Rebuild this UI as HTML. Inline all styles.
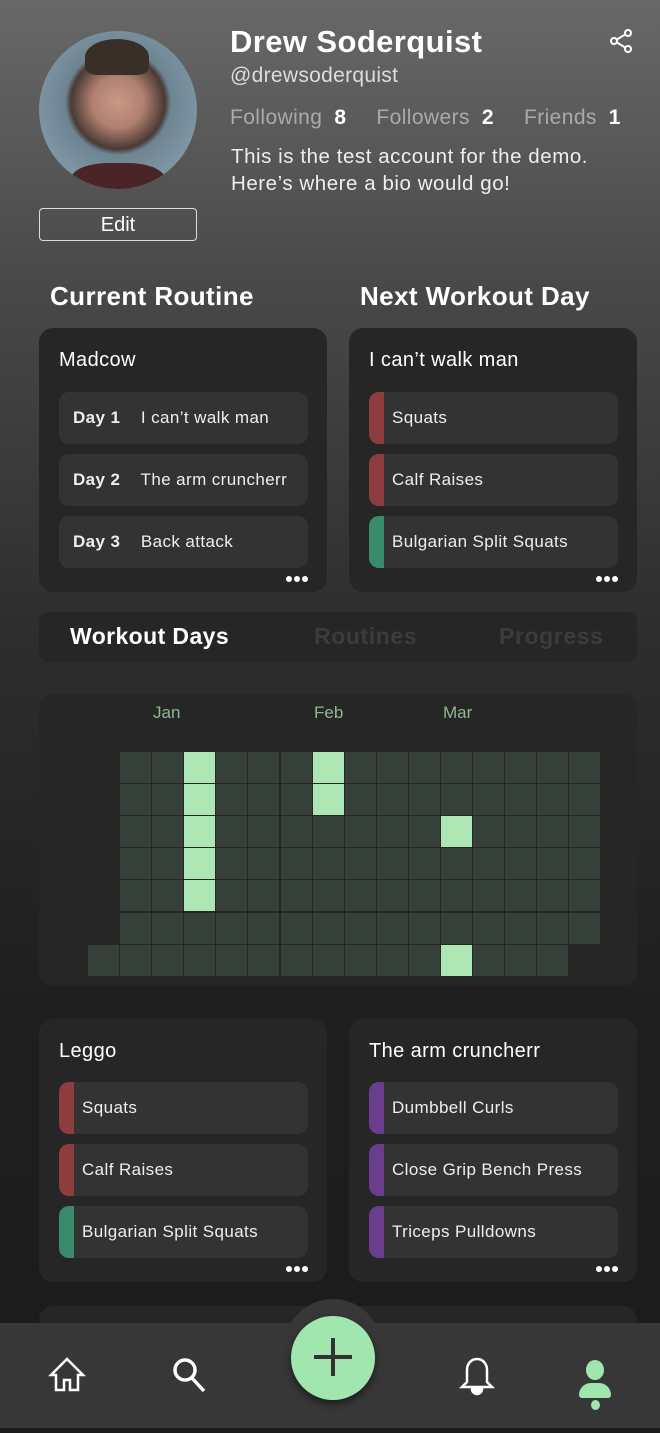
<!DOCTYPE html>
<html><head><meta charset="utf-8"><style>
*{margin:0;padding:0;box-sizing:border-box}
body{width:660px;height:1433px;overflow:hidden;position:relative;font-family:"Liberation Sans","DejaVu Sans",sans-serif;color:#fff;background:linear-gradient(#686868 0px,#474747 300px,#2d2d2d 640px,#1f1f1f 1000px,#1b1b1b 1433px)}
.a{position:absolute}
.card{position:absolute;background:#262626;border-radius:14px}
.row{position:absolute;left:20px;width:249px;height:52px;background:#333;border-radius:10px;font-size:17px;line-height:52px;overflow:hidden;color:#eee;letter-spacing:0.4px;white-space:nowrap}
.bar{position:absolute;left:0;top:0;width:15px;height:52px}
.dots{position:absolute;right:19px;bottom:8px;font-size:8px;letter-spacing:2px}
.dots i{display:inline-block;width:6px;height:6px;border-radius:3px;background:#fff;margin-left:2px}
.ct{position:absolute;left:20px;top:21px;font-size:20px;letter-spacing:0.4px}
.cell{position:absolute;width:31px;height:31px;background:#354039}
.on{background:#aee6b4}
</style></head><body>
<div class="a" style="left:39px;top:31px;width:158px;height:158px;border-radius:50%;background:radial-gradient(circle at 50% 45%,#c89a85 0,#b08070 22%,#4a3a35 40%,#6d8493 45%,#7e95a3 70%,#5b6f7c 100%);overflow:hidden">
<div class="a" style="left:32px;top:132px;width:94px;height:40px;background:#4a2426;border-radius:40% 40% 0 0"></div>
<div class="a" style="left:46px;top:8px;width:64px;height:36px;background:#3a2e28;border-radius:50% 50% 20% 20%"></div></div>
<div class="a" style="left:39px;top:208px;width:158px;height:33px;border:1.5px solid #ddd;border-radius:4px;text-align:center;font-size:20px;line-height:32px">Edit</div>
<div class="a" style="left:230px;top:24px;font-size:31px;font-weight:bold;letter-spacing:0.4px">Drew Soderquist</div>
<div class="a" style="left:230px;top:64px;font-size:21px;color:#ddd;letter-spacing:0.3px">@drewsoderquist</div>
<div class="a" style="left:230px;top:106px;font-size:21px;color:#aaa;letter-spacing:0.4px;white-space:nowrap">Following<b style="color:#fff;margin-left:12px">8</b><span style="margin-left:30px">Followers</span><b style="color:#fff;margin-left:12px">2</b><span style="margin-left:30px">Friends</span><b style="color:#fff;margin-left:12px">1</b></div>
<div class="a" style="left:231px;top:143px;font-size:20.5px;line-height:27px;color:#eee;letter-spacing:0.55px;white-space:nowrap">This is the test account for the demo.<br>Here’s where a bio would go!</div>
<svg class="a" style="left:608px;top:28px" width="26" height="26" viewBox="0 0 26 26" fill="none" stroke="#fff" stroke-width="2"><circle cx="20" cy="5" r="3"/><circle cx="6" cy="13" r="3"/><circle cx="20" cy="21" r="3"/><path d="M8.6 11.6 17.4 6.4M8.6 14.4 17.4 19.6"/></svg>
<div class="a" style="left:50px;top:281px;font-size:26px;font-weight:bold;letter-spacing:0.4px">Current Routine</div>
<div class="a" style="left:360px;top:281px;font-size:26px;font-weight:bold;letter-spacing:0.4px">Next Workout Day</div>

<div class="card" style="left:39px;top:328px;width:288px;height:264px"><div class="ct">Madcow</div>
<div class="row" style="top:64px;padding-left:14px"><b>Day 1</b>&nbsp;&nbsp;&nbsp; I can’t walk man</div>
<div class="row" style="top:126px;padding-left:14px"><b>Day 2</b>&nbsp;&nbsp;&nbsp; The arm cruncherr</div>
<div class="row" style="top:188px;padding-left:14px"><b>Day 3</b>&nbsp;&nbsp;&nbsp; Back attack</div>
<div class="dots"><i></i><i></i><i></i></div></div>
<div class="card" style="left:349px;top:328px;width:288px;height:264px"><div class="ct">I can’t walk man</div>
<div class="row" style="top:64px;padding-left:23px"><div class="bar" style="background:#8e3d3f"></div>Squats</div>
<div class="row" style="top:126px;padding-left:23px"><div class="bar" style="background:#8e3d3f"></div>Calf Raises</div>
<div class="row" style="top:188px;padding-left:23px"><div class="bar" style="background:#3a8a6c"></div>Bulgarian Split Squats</div>
<div class="dots"><i></i><i></i><i></i></div></div>

<div class="card" style="left:39px;top:612px;width:598px;height:50px;border-radius:10px">
<div class="a" style="left:31px;top:11px;font-size:23px;font-weight:bold;letter-spacing:0.4px">Workout Days</div>
<div class="a" style="left:275px;top:11px;font-size:23px;font-weight:bold;color:#3c3c3c;letter-spacing:0.6px">Routines</div>
<div class="a" style="left:460px;top:11px;font-size:23px;font-weight:bold;color:#3c3c3c;letter-spacing:0.6px">Progress</div></div>

<div class="card" style="left:39px;top:694px;width:598px;height:292px">
<div class="a" style="left:114px;top:9px;font-size:17px;color:#8fb894">Jan</div>
<div class="a" style="left:275px;top:9px;font-size:17px;color:#8fb894">Feb</div>
<div class="a" style="left:404px;top:9px;font-size:17px;color:#8fb894">Mar</div>
</div>
<div id="g"></div>
<script>
var on={"0,2":1,"0,6":1,"1,2":1,"1,6":1,"2,2":1,"2,10":1,"3,2":1,"4,2":1,"6,10":1};
var h="";for(var r=0;r<7;r++){var s=r==6?-1:0,e=r==6?14:15;for(var c=s;c<e;c++){h+='<div class="cell'+(on[r+","+c]?' on':'')+'" style="left:'+(120+c*32.1)+'px;top:'+(752+r*32.1)+'px"></div>';}}
document.getElementById("g").innerHTML=h;
</script>

<div class="card" style="left:39px;top:1019px;width:288px;height:263px"><div class="ct">Leggo</div>
<div class="row" style="top:63px;padding-left:23px"><div class="bar" style="background:#8e3d3f"></div>Squats</div>
<div class="row" style="top:125px;padding-left:23px"><div class="bar" style="background:#8e3d3f"></div>Calf Raises</div>
<div class="row" style="top:187px;padding-left:23px"><div class="bar" style="background:#3a8a6c"></div>Bulgarian Split Squats</div>
<div class="dots"><i></i><i></i><i></i></div></div>
<div class="card" style="left:349px;top:1019px;width:288px;height:263px"><div class="ct">The arm cruncherr</div>
<div class="row" style="top:63px;padding-left:23px"><div class="bar" style="background:#6b3d8f"></div>Dumbbell Curls</div>
<div class="row" style="top:125px;padding-left:23px"><div class="bar" style="background:#6b3d8f"></div>Close Grip Bench Press</div>
<div class="row" style="top:187px;padding-left:23px"><div class="bar" style="background:#6b3d8f"></div>Triceps Pulldowns</div>
<div class="dots"><i></i><i></i><i></i></div></div>
<div class="card" style="left:39px;top:1306px;width:598px;height:60px"></div>

<div class="a" style="left:0;top:1323px;width:660px;height:105px;background:#373737"></div>
<div class="a" style="left:284px;top:1299px;width:98px;height:98px;border-radius:50%;background:#373737"></div>
<div class="a" style="left:291px;top:1316px;width:84px;height:84px;border-radius:50%;background:#a0e6ae;box-shadow:0 4px 8px rgba(0,0,0,.5)"></div>
<div class="a" style="left:314px;top:1355px;width:38px;height:4px;background:#333"></div>
<div class="a" style="left:331px;top:1338px;width:4px;height:38px;background:#333"></div>
<svg class="a" style="left:48px;top:1356px" width="38" height="38" viewBox="0 0 38 38" fill="none" stroke="#fff" stroke-width="2.5"><path d="M19 3 3 19h5v15h8V24h6v10h8V19h5z"/></svg>
<svg class="a" style="left:170px;top:1355px" width="40" height="40" viewBox="0 0 40 40" fill="none" stroke="#fff" stroke-width="3.5"><circle cx="15" cy="15" r="10"/><path d="M22 23l12 13"/></svg>
<svg class="a" style="left:458px;top:1356px" width="38" height="40" viewBox="0 0 38 40" fill="none" stroke="#fff" stroke-width="2.5"><path d="M19 3c-6 0-10 5-10 11v12l-5 5h30l-5-5V14c0-6-4-11-10-11z"/><path d="M14 33h10a5 5 0 0 1-10 0z" fill="#fff"/></svg>
<div class="a" style="left:586px;top:1360px;width:18px;height:20px;border-radius:50%;background:#a0e6ae"></div>
<div class="a" style="left:579px;top:1383px;width:32px;height:15px;border-radius:12px 12px 3px 3px;background:#a0e6ae"></div>
<div class="a" style="left:591px;top:1400px;width:9px;height:10px;border-radius:50%;background:#a0e6ae"></div>
</body></html>
